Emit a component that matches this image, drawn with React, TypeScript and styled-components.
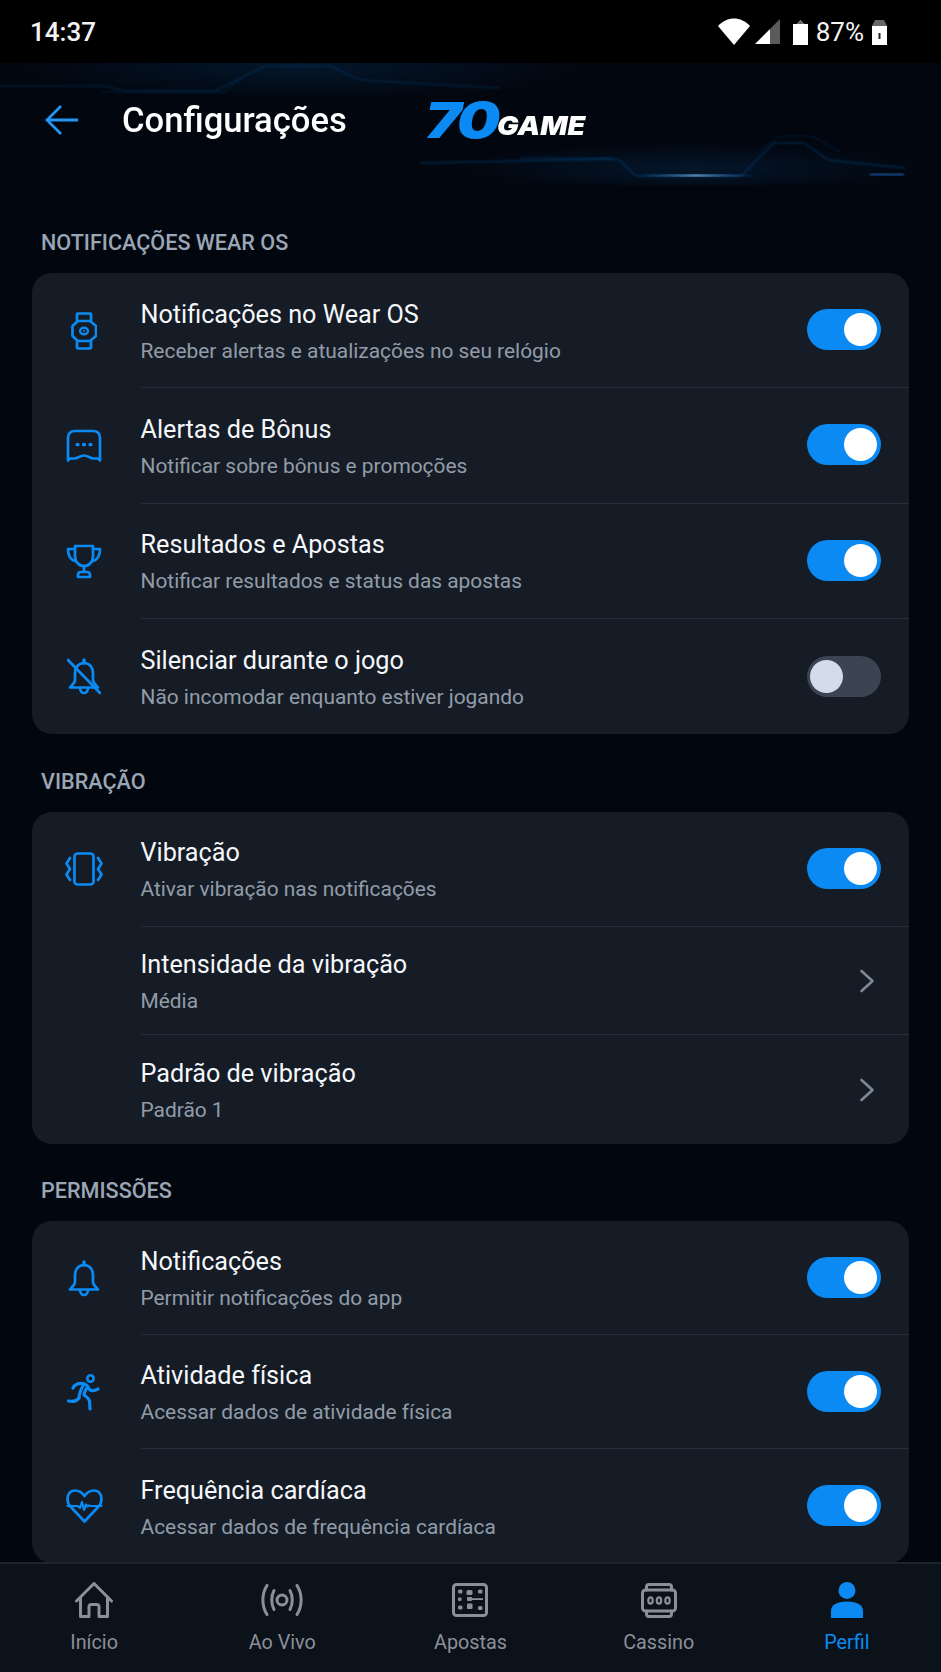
import styled, { createGlobalStyle } from 'styled-components';
import { ReactNode } from 'react';

const BLUE = '#0a8af2';

const GlobalStyle = createGlobalStyle`
  html, body {
    margin: 0;
    padding: 0;
    background: #02060e;
  }
  * {
    box-sizing: border-box;
  }
`;

const Line = ({ d, w = 2.7 }: { d: string; w?: number }) => (
  <path d={d} fill="none" stroke="currentColor" strokeWidth={w} strokeLinecap="round" strokeLinejoin="round" />
);

const WatchIcon = () => (
  <svg width="26" height="38" viewBox="0 0 26 38">
    <Line d="M6 9V2.500C6 2 6.500 1.500 7 1.500H19C19.500 1.500 20 2 20 2.500V9" />
    <Line d="M6 29V35.500C6 36 6.500 36.500 7 36.500H19C19.500 36.500 20 36 20 35.500V29" />
    <Line d="M7 9H19L25 14V24L19 29H7L1.500 24V14Z" />
    <ellipse cx="13" cy="19" rx="4" ry="3.200" fill="none" stroke="currentColor" strokeWidth="2.400" />
    <circle cx="13" cy="19" r="1" fill="currentColor" />
  </svg>
);

const ChatIcon = () => (
  <svg width="36" height="34" viewBox="0 0 36 34">
    <Line d="M9 2H27C31.500 2 34 4.500 34 9V31.500C33 29 31 29.500 28 29.500C24 29.500 22 26.500 18 26.500C14 26.500 12 29.500 8 29.500C5 29.500 3 29 2 31.500V9C2 4.500 4.500 2 9 2Z" />
    <rect x="9.500" y="14" width="4" height="3.200" rx="1.200" fill="currentColor" />
    <rect x="16" y="14" width="4" height="3.200" rx="1.200" fill="currentColor" />
    <rect x="22.500" y="14" width="4" height="3.200" rx="1.200" fill="currentColor" />
  </svg>
);

const TrophyIcon = () => (
  <svg width="36" height="35" viewBox="0 0 36 35">
    <Line d="M9 2H27V12C27 18 23 22 18 22C13 22 9 18 9 12Z" />
    <Line d="M9 5H2C2 12 4 16 10 17.500" />
    <Line d="M27 5H34C34 12 32 16 26 17.500" />
    <Line d="M18 22V28" />
    <Line d="M12 33V31C12 29 13.500 28 15 28H21C22.500 28 24 29 24 31V33H12Z" />
  </svg>
);

const BellPaths = () => (
  <>
    <Line d="M16 5C10 5 7 10 7 15V22C7 25 4 27 2 29.500H30C28 27 25 25 25 22V15C25 10 22 5 16 5Z" />
    <Line d="M16 5V2" w={3.400} />
    <Line d="M12 30C12 33 14 35 16 35C18 35 20 33 20 30" />
  </>
);

const BellIcon = () => (
  <svg width="32" height="37" viewBox="0 0 32 37">
    <BellPaths />
  </svg>
);

const BellOffIcon = () => (
  <svg width="34" height="37" viewBox="-1 0 34 37">
    <BellPaths />
    <path d="M0 2L32 35" stroke="currentColor" strokeWidth="2.700" strokeLinecap="round" />
  </svg>
);

const VibrateIcon = () => (
  <svg width="38" height="34" viewBox="0 0 38 34">
    <rect x="9.500" y="1.500" width="19" height="31" rx="3" fill="none" stroke="currentColor" strokeWidth="2.700" />
    <Line d="M5 6L1.500 11.500L5 17L1.500 22.500L5 28" />
    <Line d="M33 6L36.500 11.500L33 17L36.500 22.500L33 28" />
  </svg>
);

const RunnerIcon = () => (
  <svg width="34" height="37" viewBox="0 0 34 37">
    <circle cx="23.500" cy="4.500" r="3.200" fill="none" stroke="currentColor" strokeWidth="2.600" />
    <Line d="M6 14C8 10 12 9 16 9.500C19 10 21 12 22 15C23 17 26 17.500 31 15" w={3.200} />
    <Line d="M17 10C14 15 12 20 12 24C10 27 6 28 1.500 27" w={3.200} />
    <Line d="M20 14C18 17 17 19 17 21C20 23 22 25 22.500 27L23 35" w={3.200} />
  </svg>
);

const HeartIcon = () => (
  <svg width="37" height="34" viewBox="0 0 37 34">
    <Line d="M18.500 7C16 3 12 1.500 8.500 1.500C4.500 1.500 1.500 5 1.500 10C1.500 13 2.500 15.500 4.500 17.500L18.500 32.500L32.500 17.500C34.500 15.500 35.500 13 35.500 10C35.500 5 32.500 1.500 28.500 1.500C25 1.500 21 3 18.500 7Z" />
    <Line d="M1.500 17H12L14 19L16 13L18 21L20 15.500L21.500 17.500L23 16.500L25 17H35.500" w={2.200} />
  </svg>
);

const ChevronIcon = () => (
  <svg width="16" height="24" viewBox="0 0 16 24">
    <path d="M2.500 2L13.500 12L2.500 22" fill="none" stroke="#7f8994" strokeWidth="2.600" strokeLinecap="round" strokeLinejoin="round" />
  </svg>
);

const HomeNavIcon = () => (
  <svg width="38" height="36" viewBox="0 0 38 36">
    <Line d="M1.500 19L19 1.500L36.500 19" w={3} />
    <Line d="M5.500 16V34.500H14V24.500C14 23.500 15 22.500 16 22.500H22C23 22.500 24 23.500 24 24.500V34.500H32.500V16" w={3} />
  </svg>
);

const LiveNavIcon = () => (
  <svg width="42" height="32" viewBox="0 0 42 32">
    <circle cx="21" cy="16" r="5" fill="none" stroke="currentColor" strokeWidth="3" />
    <Line d="M13 6.500C10 12 10 20 13 25.500" w={3} />
    <Line d="M29 6.500C32 12 32 20 29 25.500" w={3} />
    <Line d="M6 1.500C0.500 10 0.500 22 6 30.500" w={3} />
    <Line d="M36 1.500C41.500 10 41.500 22 36 30.500" w={3} />
  </svg>
);

const BetsNavIcon = () => (
  <svg width="36" height="34" viewBox="0 0 36 34">
    <rect x="1.500" y="1.500" width="33" height="31" rx="3" fill="none" stroke="currentColor" strokeWidth="3" />
    <g fill="currentColor">
      <rect x="6" y="6.500" width="4.500" height="4" rx="1.500" />
      <rect x="26" y="6.500" width="4.500" height="4" rx="1.500" />
      <rect x="6" y="14.500" width="3.500" height="3.500" rx="1" />
      <rect x="6" y="22.500" width="4.500" height="4" rx="1.500" />
      <rect x="26" y="23" width="4.500" height="4" rx="1.500" />
      <rect x="14.500" y="7" width="6" height="5" rx="1.500" />
      <rect x="15" y="14" width="5" height="4" rx="1" />
      <rect x="15" y="20.500" width="5.500" height="5.500" rx="1" />
      <rect x="20" y="15.200" width="11" height="1.800" />
    </g>
  </svg>
);

const CasinoNavIcon = () => (
  <svg width="36" height="35" viewBox="0 0 36 35">
    <rect x="1.500" y="7" width="33" height="21" rx="3" fill="none" stroke="currentColor" strokeWidth="3" />
    <Line d="M5.500 7V4C5.500 2.500 6.500 1.500 8 1.500H28C29.500 1.500 30.500 2.500 30.500 4V7" w={3} />
    <Line d="M5.500 28V31C5.500 32.500 6.500 33.500 8 33.500H28C29.500 33.500 30.500 32.500 30.500 31V28" w={3} />
    <g fill="none" stroke="currentColor" strokeWidth="2.200">
      <ellipse cx="9.500" cy="17.500" rx="2.200" ry="3.200" />
      <ellipse cx="18" cy="17.500" rx="2.200" ry="3.200" />
      <ellipse cx="26.500" cy="17.500" rx="2.200" ry="3.200" />
    </g>
  </svg>
);

const ProfileNavIcon = () => (
  <svg width="32" height="36" viewBox="0 0 32 36">
    <ellipse cx="16" cy="8.500" rx="8.500" ry="8.500" fill="currentColor" />
    <path d="M0 36V29C0 23 6 19.500 16 19.500C26 19.500 32 23 32 29V36Z" fill="currentColor" />
  </svg>
);

const Page = styled.div`
  position: relative;
  width: 941px;
  height: 1672px;
  display: flex;
  flex-direction: column;
  overflow: hidden;
  background: #02060e;
  font-family: Roboto, "Liberation Sans", sans-serif;
  color: #fff;
`;

const StatusBar = styled.div`
  height: 63px;
  flex: none;
  background: #000;
  display: flex;
  align-items: center;
  justify-content: space-between;
  padding: 0 54px 0 30px;
`;

const Clock = styled.span`
  font-size: 26px;
  font-weight: 500;
  color: #f4f4f4;
`;

const StatusIcons = styled.div`
  display: flex;
  align-items: center;
`;

const Percent = styled.span`
  font-size: 26px;
  color: #f4f4f4;
  margin: 0 8px 0 8px;
`;

const Header = styled.header`
  position: relative;
  height: 122px;
  flex: none;
  display: flex;
  align-items: center;
  padding: 0 0 8px 45px;
`;

const Circuit = styled.svg`
  position: absolute;
  inset: 0;
  pointer-events: none;
`;

const BackButton = styled.div`
  position: relative;
  width: 33px;
  height: 32px;
  color: #2196f3;
`;

const Title = styled.h1`
  position: relative;
  margin: 0 0 0 44px;
  font-size: 34.600px;
  font-weight: 500;
  color: #fff;
`;

const Logo = styled.div`
  position: relative;
  margin-left: 78px;
  display: flex;
  align-items: flex-end;
  font-family: Inter, "Liberation Sans", sans-serif;
  font-weight: 900;
  font-style: italic;
  line-height: 1;
`;

const LogoNumber = styled.span`
  display: inline-block;
  font-size: 50px;
  letter-spacing: -3px;
  color: ${BLUE};
  transform: scaleX(1.22);
  transform-origin: left center;
  margin-right: 13px;
`;

const LogoWord = styled.span`
  display: inline-block;
  font-size: 26px;
  letter-spacing: 0;
  color: #fff;
  margin: 0 0 6px 1px;
  transform: scaleX(1.1);
  transform-origin: left center;
`;

const Content = styled.main`
  flex: 1;
  min-height: 0;
  overflow: hidden;
  padding: 43px 32px 0;
`;

const SectionLabel = styled.h2`
  margin: 0 0 15px 9px;
  height: 30px;
  line-height: 30px;
  font-size: 21.600px;
  font-weight: 500;
  color: #9aa6b6;
`;

const Card = styled.section`
  background: #151c26;
  border-radius: 20px;
  margin-bottom: 32.600px;
`;

const Row = styled.div<{ $height: number }>`
  height: ${(p) => p.$height}px;
  display: flex;
  align-items: stretch;
  padding-left: 34px;
`;

const IconSlot = styled.div`
  width: 75px;
  flex: none;
  display: flex;
  align-items: center;
  justify-content: center;
  margin-left: -1px;
  padding-right: 37px;
  color: ${BLUE};
`;

const RowBody = styled.div<{ $last?: boolean }>`
  flex: 1;
  display: flex;
  align-items: center;
  justify-content: space-between;
  padding: 3px 28px 0 0;
  margin-left: 0.500px;
  border-bottom: ${(p) => (p.$last ? 'none' : '1px solid #262f3a')};
`;

const RowText = styled.div`
  display: flex;
  flex-direction: column;
  gap: 8px;
`;

const RowTitle = styled.div`
  font-size: 25.200px;
  line-height: 30px;
  color: #f5f7fa;
`;

const RowSub = styled.div`
  font-size: 20.900px;
  line-height: 26px;
  color: #929ca8;
`;

const Toggle = styled.div<{ $on: boolean }>`
  position: relative;
  width: 74px;
  height: 41px;
  margin-top: -4px;
  border-radius: 21px;
  background: ${(p) => (p.$on ? BLUE : '#3b4551')};

  &::after {
    content: '';
    position: absolute;
    top: 4px;
    left: ${(p) => (p.$on ? '37px' : '3px')};
    width: 33px;
    height: 33px;
    border-radius: 50%;
    background: ${(p) => (p.$on ? '#ffffff' : '#d3dcea')};
  }
`;

const Chevron = styled.div`
  display: flex;
  margin: -3px 6px 0 0;
`;

const BottomNav = styled.nav`
  height: 110px;
  flex: none;
  display: grid;
  grid-template-columns: repeat(5, 1fr);
  background: #0c1219;
  border-top: 2px solid #1c242e;
`;

const NavItem = styled.div<{ $active?: boolean }>`
  display: flex;
  flex-direction: column;
  align-items: center;
  color: ${(p) => (p.$active ? BLUE : '#8b9098')};
`;

const NavIcon = styled.div`
  height: 36px;
  margin-top: 18px;
  display: flex;
  align-items: center;
`;

const NavLabel = styled.span`
  margin-top: 12px;
  font-size: 19.800px;
  line-height: 26px;
`;

interface SettingRow {
  icon?: ReactNode;
  title: string;
  sub: string;
  on?: boolean;
  height: number;
}

const sections: { label: string; rows: SettingRow[] }[] = [
  {
    label: 'NOTIFICAÇÕES WEAR OS',
    rows: [
      { icon: <WatchIcon />, title: 'Notificações no Wear OS', sub: 'Receber alertas e atualizações no seu relógio', on: true, height: 115.300 },
      { icon: <ChatIcon />, title: 'Alertas de Bônus', sub: 'Notificar sobre bônus e promoções', on: true, height: 115.300 },
      { icon: <TrophyIcon />, title: 'Resultados e Apostas', sub: 'Notificar resultados e status das apostas', on: true, height: 115.300 },
      { icon: <BellOffIcon />, title: 'Silenciar durante o jogo', sub: 'Não incomodar enquanto estiver jogando', on: false, height: 115.300 },
    ],
  },
  {
    label: 'VIBRAÇÃO',
    rows: [
      { icon: <VibrateIcon />, title: 'Vibração', sub: 'Ativar vibração nas notificações', on: true, height: 115 },
      { title: 'Intensidade da vibração', sub: 'Média', height: 108.500 },
      { title: 'Padrão de vibração', sub: 'Padrão 1', height: 108.500 },
    ],
  },
  {
    label: 'PERMISSÕES',
    rows: [
      { icon: <BellIcon />, title: 'Notificações', sub: 'Permitir notificações do app', on: true, height: 114 },
      { icon: <RunnerIcon />, title: 'Atividade física', sub: 'Acessar dados de atividade física', on: true, height: 114 },
      { icon: <HeartIcon />, title: 'Frequência cardíaca', sub: 'Acessar dados de frequência cardíaca', on: true, height: 114 },
    ],
  },
];

const navItems = [
  { label: 'Início', icon: <HomeNavIcon /> },
  { label: 'Ao Vivo', icon: <LiveNavIcon /> },
  { label: 'Apostas', icon: <BetsNavIcon /> },
  { label: 'Cassino', icon: <CasinoNavIcon /> },
  { label: 'Perfil', icon: <ProfileNavIcon />, active: true },
];

const App = () => (
  <Page>
    <GlobalStyle />
    <StatusBar>
      <Clock>14:37</Clock>
      <StatusIcons>
        <svg width="32" height="27" viewBox="0 0 32 27">
          <path d="M0 8C9 -2 23 -2 32 8L16 27Z" fill="#fff" />
        </svg>
        <svg width="25" height="25" viewBox="0 0 25 25" style={{ marginLeft: 5 }}>
          <path d="M0 25L15 10V25Z" fill="#fff" />
          <path d="M15 10L25 0V25H15Z" fill="#5b5b5b" />
        </svg>
        <svg width="15" height="26" viewBox="0 0 15 26" style={{ marginLeft: 13 }}>
          <path d="M4 5L7.500 1L11 5H15V26H0V5Z" fill="#fff" />
          <path d="M4 5L7.500 1L11 5Z" fill="#666" />
        </svg>
        <Percent>87%</Percent>
        <svg width="15" height="26" viewBox="0 0 15 26">
          <path d="M3 7L5 1H10L12 7H15V26H0V7Z" fill="#fff" />
          <path d="M0 7L3 1H12L15 7Z" fill="#666" />
          <rect x="6.500" y="14" width="2" height="6" fill="#222" />
        </svg>
      </StatusIcons>
    </StatusBar>

    <Header>
      <Circuit width="941" height="122" viewBox="0 63 941 122">
        <defs>
          <radialGradient id="glowA" cx="0.5" cy="0.5" r="0.5">
            <stop offset="0" stopColor="#0d5fae" stopOpacity="0.18" />
            <stop offset="1" stopColor="#0d5fae" stopOpacity="0" />
          </radialGradient>
          <linearGradient id="spark" x1="0" x2="1" y1="0" y2="0">
            <stop offset="0" stopColor="#1a8cff" stopOpacity="0" />
            <stop offset="0.5" stopColor="#8cc6ff" />
            <stop offset="1" stopColor="#1a8cff" stopOpacity="0" />
          </linearGradient>
          <filter id="soft">
            <feGaussianBlur stdDeviation="0.800" />
          </filter>
        </defs>
        <ellipse cx="300" cy="66" rx="300" ry="36" fill="url(#glowA)" />
        <ellipse cx="690" cy="168" rx="240" ry="26" fill="url(#glowA)" />
        <g fill="none" stroke="#0f5ea8" strokeWidth="1.500" filter="url(#soft)">
          <path d="M0 86H105L125 91H215L265 66H330L360 80L500 88" opacity="0.3" />
          <path d="M100 92H225L240 78" opacity="0.18" />
          <path d="M420 163L618 159L636 176H741L774 143H804L828 160L905 168" opacity="0.4" />
          <path d="M520 158H612" opacity="0.3" />
          <path d="M760 150L780 136H812L840 152" opacity="0.2" />
        </g>
        <rect x="636" y="174.500" width="120" height="2" fill="url(#spark)" filter="url(#soft)" />
        <rect x="870" y="173.500" width="34" height="2" fill="#0f5aa3" filter="url(#soft)" />
      </Circuit>
      <BackButton>
        <svg width="33" height="32" viewBox="0 0 33 32">
          <path d="M16 2L2 16L16 30M2 16H33" fill="none" stroke="currentColor" strokeWidth="2.800" />
        </svg>
      </BackButton>
      <Title>Configurações</Title>
      <Logo>
        <LogoNumber>70</LogoNumber>
        <LogoWord>GAME</LogoWord>
      </Logo>
    </Header>

    <Content>
      {sections.map((section) => (
        <div key={section.label}>
          <SectionLabel>{section.label}</SectionLabel>
          <Card>
            {section.rows.map((row, i) => (
              <Row key={row.title} $height={row.height}>
                <IconSlot>{row.icon}</IconSlot>
                <RowBody $last={i === section.rows.length - 1}>
                  <RowText>
                    <RowTitle>{row.title}</RowTitle>
                    <RowSub>{row.sub}</RowSub>
                  </RowText>
                  {row.on === undefined ? (
                    <Chevron>
                      <ChevronIcon />
                    </Chevron>
                  ) : (
                    <Toggle $on={row.on} />
                  )}
                </RowBody>
              </Row>
            ))}
          </Card>
        </div>
      ))}
    </Content>

    <BottomNav>
      {navItems.map((item) => (
        <NavItem key={item.label} $active={item.active}>
          <NavIcon>{item.icon}</NavIcon>
          <NavLabel>{item.label}</NavLabel>
        </NavItem>
      ))}
    </BottomNav>
  </Page>
);

export default App;
